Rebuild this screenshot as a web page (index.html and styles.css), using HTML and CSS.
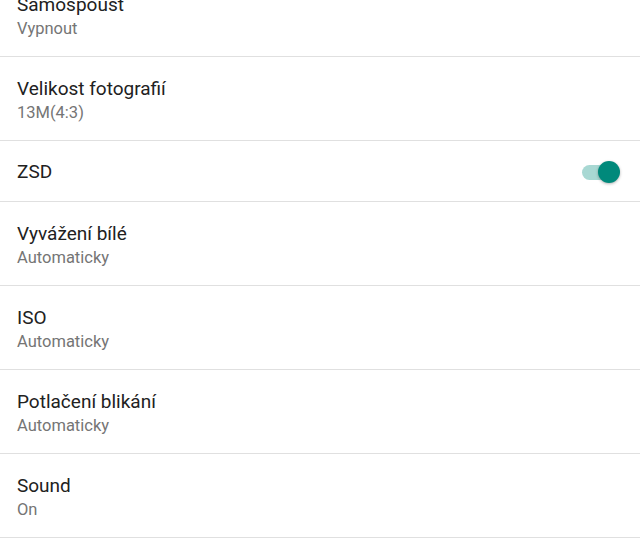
FILE: index.html
```html
<!DOCTYPE html>
<html lang="cs">
<head>
    <meta charset="UTF-8">
    <meta name="viewport" content="width=device-width, initial-scale=1.0">
    <title>Nastavení fotoaparátu</title>
    <link rel="stylesheet" href="styles.css">
</head>
<body>
    <div class="settings">
        <div class="item">
            <div class="title">Samospoušť</div>
            <div class="summary">Vypnout</div>
        </div>
        <div class="item">
            <div class="title">Velikost fotografií</div>
            <div class="summary">13M(4:3)</div>
        </div>
        <div class="item item-switch">
            <div class="title">ZSD</div>
            <div class="switch on">
                <span class="track"></span>
                <span class="thumb"></span>
            </div>
        </div>
        <div class="item">
            <div class="title">Vyvážení bílé</div>
            <div class="summary">Automaticky</div>
        </div>
        <div class="item">
            <div class="title">ISO</div>
            <div class="summary">Automaticky</div>
        </div>
        <div class="item">
            <div class="title">Potlačení blikání</div>
            <div class="summary">Automaticky</div>
        </div>
        <div class="item">
            <div class="title">Sound</div>
            <div class="summary">On</div>
        </div>
    </div>
</body>
</html>
```

FILE: styles.css
```css
* {
    margin: 0;
    padding: 0;
    box-sizing: border-box;
}
body {
    font-family: 'Roboto', 'Liberation Sans', sans-serif;
    background-color: #fff;
    overflow: hidden;
}
.settings {
    margin-top: -27px;
}
.item {
    height: 84px;
    padding: 20px 20px 0 17px;
    border-bottom: 1px solid #e0e0e0;
}
.title {
    font-size: 19px;
    line-height: 24px;
    color: #212121;
}
.summary {
    font-size: 16.5px;
    line-height: 24px;
    color: #757575;
}
.item-switch {
    height: 61px;
    padding-top: 1px;
    display: flex;
    align-items: center;
    justify-content: space-between;
}
.switch {
    position: relative;
    width: 38px;
    height: 22px;
}
.track {
    position: absolute;
    left: 0;
    top: 4px;
    width: 36px;
    height: 15px;
    border-radius: 8px;
    background-color: #a8d8d3;
}
.thumb {
    position: absolute;
    right: 0;
    top: 0;
    width: 22px;
    height: 22px;
    border-radius: 50%;
    background-color: #00897b;
    box-shadow: 0 1px 3px rgba(0, 0, 0, 0.3);
}
```
